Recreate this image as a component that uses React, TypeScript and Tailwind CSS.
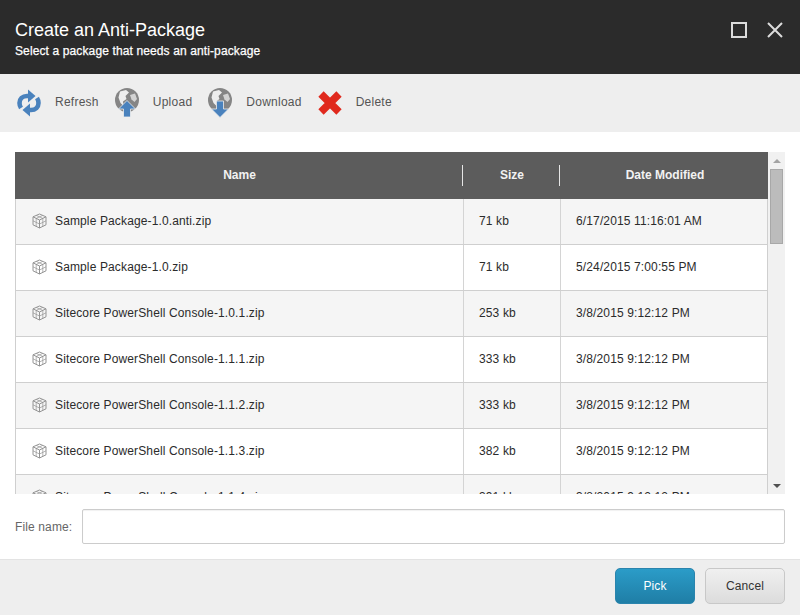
import React from 'react';

const rows = [
  { name: 'Sample Package-1.0.anti.zip', size: '71 kb', date: '6/17/2015 11:16:01 AM' },
  { name: 'Sample Package-1.0.zip', size: '71 kb', date: '5/24/2015 7:00:55 PM' },
  { name: 'Sitecore PowerShell Console-1.0.1.zip', size: '253 kb', date: '3/8/2015 9:12:12 PM' },
  { name: 'Sitecore PowerShell Console-1.1.1.zip', size: '333 kb', date: '3/8/2015 9:12:12 PM' },
  { name: 'Sitecore PowerShell Console-1.1.2.zip', size: '333 kb', date: '3/8/2015 9:12:12 PM' },
  { name: 'Sitecore PowerShell Console-1.1.3.zip', size: '382 kb', date: '3/8/2015 9:12:12 PM' },
  { name: 'Sitecore PowerShell Console-1.1.4.zip', size: '391 kb', date: '3/8/2015 9:12:12 PM' },
];

function RefreshIcon() {
  return (
    <svg width="26" height="28" viewBox="0 0 26 28" fill="none">
      <path d="M13 7H11C6.5 7 3.5 10 3.5 14C3.5 16 4 17.5 5 19" stroke="#4a82bd" strokeWidth="4.6" />
      <path d="M12 0.5L19.5 7L12 13.5Z" fill="#4a82bd" />
      <path d="M13 21H15C19.5 21 22.5 18 22.5 14C22.5 12 22 10.5 21 9" stroke="#4a82bd" strokeWidth="4.6" />
      <path d="M14 27.5L6.5 21L14 14.5Z" fill="#4a82bd" />
    </svg>
  );
}

function GlobeIcon({ down }: { down?: boolean }) {
  return (
    <svg width="26" height="30" viewBox="0 0 26 30">
      <circle cx="13" cy="12" r="12" fill="#858585" />
      <path d="M6 3.5L12 2L15 4.5L11.5 8L12.5 11L9 13.5L9.5 18L6.5 15L4.5 9.5Z" fill="#eeeeee" />
      <path d="M16 7L21 5.5L23 11L20.5 14L17.5 11.5Z" fill="#eeeeee" opacity="0.75" />
      {down ? (
        <path d="M9.5 13H16.5V21H21.5L13 29.5L4.5 21H9.5Z" fill="#4a82bd" stroke="#eeeeee" strokeWidth="0.8" />
      ) : (
        <path d="M13 12.5L21.5 21H16.5V29H9.5V21H4.5Z" fill="#4a82bd" stroke="#eeeeee" strokeWidth="0.8" />
      )}
    </svg>
  );
}

function DeleteIcon() {
  return (
    <svg width="26" height="26" viewBox="0 0 26 26" fill="none">
      <path d="M4 4L22 22M22 4L4 22" stroke="#e0291d" strokeWidth="7.5" />
    </svg>
  );
}

function PackageIcon() {
  return (
    <svg width="15" height="16" viewBox="0 0 15 16" fill="none" stroke="#949494" strokeWidth="1" className="shrink-0">
      <path d="M7.5 1L14 3.8V11.8L7.5 15L1 11.8V3.8Z" />
      <path d="M1 3.8L7.5 7L14 3.8M7.5 7V15" />
      <path d="M1 7.8L7.5 11L14 7.8M4.2 2.4L10.8 5.4M10.8 2.4L4.2 5.4M4.2 5.4V13.4M10.8 5.4V13.4" strokeWidth="0.7" />
    </svg>
  );
}

function ToolButton({ icon, label }: { icon: React.ReactNode; label: string }) {
  return (
    <div className="flex items-center gap-[13px]">
      {icon}
      <span className="text-xs leading-4 pb-[3px] tracking-[0.25px] text-[#555]">{label}</span>
    </div>
  );
}

export default function App() {
  return (
    <div className="w-[800px] h-[615px] flex flex-col bg-white overflow-hidden font-['Liberation_Sans',Arial,sans-serif]">
      {/* Title bar */}
      <div className="h-[74px] shrink-0 bg-[#2b2b2b] flex items-center justify-between pl-[15px] pr-[17px]">
        <div className="pt-[3px]">
          <h1 className="text-lg leading-[22px] text-white">Create an Anti-Package</h1>
          <p className="text-xs leading-[16px] tracking-[0.12px] [-webkit-text-stroke:0.25px_white] text-white mt-[2px]">Select a package that needs an anti-package</p>
        </div>
        <div className="flex items-center gap-[20px] mb-[14px]">
          <div className="w-4 h-4 border-2 border-[#dcdcdc]" />
          <svg width="16" height="16" viewBox="0 0 16 16" fill="none" stroke="#dcdcdc" strokeWidth="2">
            <path d="M1 1L15 15M15 1L1 15" />
          </svg>
        </div>
      </div>

      {/* Toolbar */}
      <div className="h-[58px] shrink-0 bg-[#eeeeee] flex items-center gap-[15px] pl-[16px]">
        <ToolButton icon={<RefreshIcon />} label="Refresh" />
        <ToolButton icon={<GlobeIcon />} label="Upload" />
        <ToolButton icon={<GlobeIcon down />} label="Download" />
        <ToolButton icon={<DeleteIcon />} label="Delete" />
      </div>

      {/* List */}
      <div className="mt-[20px] mx-[15px] h-[342px] shrink-0 flex overflow-hidden">
        <div className="w-[753px] h-full overflow-hidden">
          <div className="h-[47px] bg-[#5c5c5c] flex items-center text-xs font-bold text-[#f2f2f2]">
            <div className="w-[447px] pl-[2px] pb-[1px] text-center">Name</div>
            <div className="w-[97px] h-[21px] pl-[2px] leading-[21px] text-center border-l border-[#e6e6e6]">Size</div>
            <div className="flex-1 h-[21px] pl-[2px] leading-[21px] text-center border-l border-[#e6e6e6]">Date Modified</div>
          </div>
          <div className="border-l border-r border-[#cfcfcf]">
            {rows.map((row, i) => (
              <div
                key={row.name}
                className={`h-[46px] flex text-xs tracking-[0.13px] text-[#2b2b2b] border-b border-[#cfcfcf] ${i % 2 === 0 ? 'bg-[#f5f5f5]' : 'bg-white'}`}
              >
                <div className="w-[447px] flex items-center gap-[8px] pl-[16px] pb-[2px]">
                  <PackageIcon />
                  <span>{row.name}</span>
                </div>
                <div className="w-[97px] flex items-center pl-[15px] pb-[2px] border-l border-[#d4d4d4]">{row.size}</div>
                <div className="flex-1 flex items-center pl-[15px] pb-[2px] border-l border-[#d4d4d4]">{row.date}</div>
              </div>
            ))}
          </div>
        </div>
        {/* Scrollbar */}
        <div className="w-[17px] h-full bg-[#f1f1f1] flex flex-col items-center">
          <div className="h-[17px] w-full flex items-center justify-center">
            <div className="w-0 h-0 border-l-[4px] border-r-[4px] border-b-[4px] border-l-transparent border-r-transparent border-b-[#a3a3a3]" />
          </div>
          <div className="w-[13px] h-[75px] bg-[#bcbcbc] border border-[#a8a8a8]" />
          <div className="flex-1" />
          <div className="h-[17px] w-full flex items-center justify-center">
            <div className="w-0 h-0 border-l-[4px] border-r-[4px] border-t-[4px] border-l-transparent border-r-transparent border-t-[#505050]" />
          </div>
        </div>
      </div>

      {/* File name */}
      <div className="flex-1 flex items-center gap-[10px] px-[15px]">
        <label className="text-xs tracking-[0.13px] text-[#666]">File name:</label>
        <input className="flex-1 h-[35px] border border-[#cccccc] rounded-[2px] bg-white shadow-[inset_0_1px_1px_rgba(0,0,0,0.06)]" />
      </div>

      {/* Footer */}
      <div className="h-[56px] shrink-0 bg-[#eeeeee] border-t border-[#e3e3e3] flex items-center justify-end gap-[10px] pr-[15px] pb-[3px]">
        <button className="w-[80px] h-[36px] rounded-[5px] text-xs tracking-[0.13px] pb-[1px] text-white border border-[#2a84ad] bg-gradient-to-b from-[#2b9cc8] to-[#1f7ea6]">Pick</button>
        <button className="w-[80px] h-[36px] rounded-[5px] text-xs tracking-[0.13px] pb-[1px] text-[#333] border border-[#c8c8c8] bg-gradient-to-b from-[#f0f0f0] to-[#dcdcdc]">Cancel</button>
      </div>
    </div>
  );
}
